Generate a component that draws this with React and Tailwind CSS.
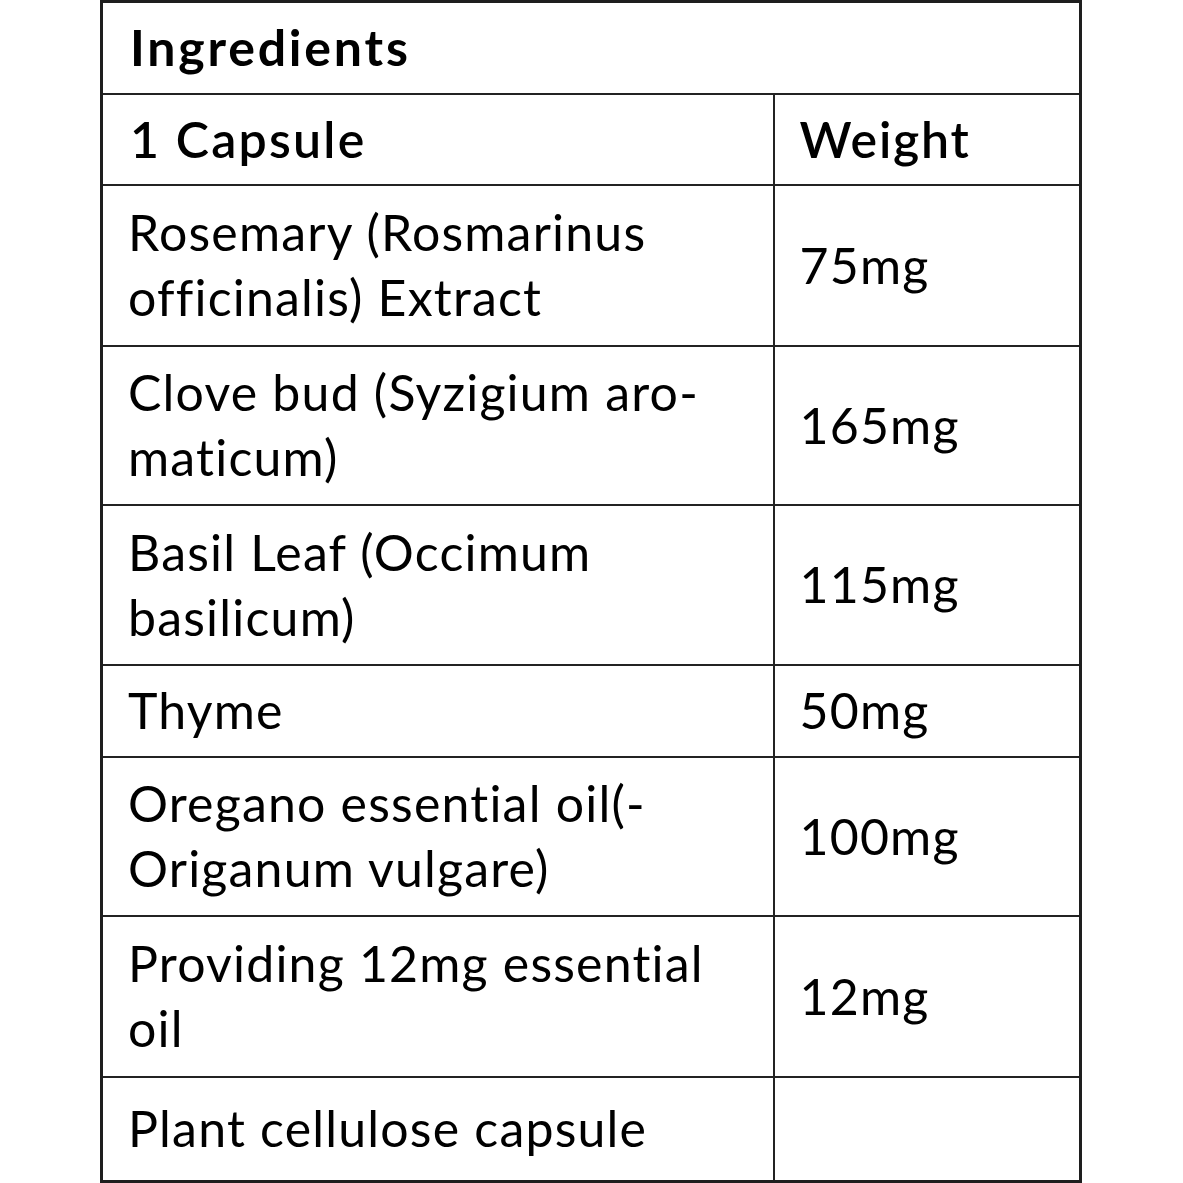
const rows = [
  { name: ["Rosemary (Rosmarinus", "officinalis) Extract"], weight: "75mg", h: "h-[161px]" },
  { name: ["Clove bud (Syzigium aro-", "maticum)"], weight: "165mg", h: "h-[159px]" },
  { name: ["Basil Leaf (Occimum", "basilicum)"], weight: "115mg", h: "h-[160px]" },
  { name: ["Thyme"], weight: "50mg", h: "h-[92px]" },
  { name: ["Oregano essential oil(-", "Origanum vulgare)"], weight: "100mg", h: "h-[159px]" },
  { name: ["Providing 12mg essential", "oil"], weight: "12mg", h: "h-[161px]" },
];

const cell = "border-2 border-[#232323] align-middle";

export default function App() {
  return (
    <div
      className="w-[1183px] h-[1183px] bg-white text-black"
      style={{ fontFamily: "Lato, 'Open Sans', sans-serif" }}
    >
      <table className="ml-[100px] w-[982px] table-fixed border-collapse border-[3px] border-[#1e1e1e] text-[50px] leading-[65px] tracking-[1.2px] [font-variant-ligatures:none]">
        <colgroup>
          <col className="w-[672px]" />
          <col />
        </colgroup>
        <tbody>
          <tr className="h-[92px]">
            <td colSpan={2} className={`${cell} pl-[27px] font-bold tracking-[2.8px]`}>
              Ingredients
            </td>
          </tr>
          <tr className="h-[91px]">
            <td className={`${cell} pl-[27px] font-semibold tracking-[2.2px]`}>1 Capsule</td>
            <td className={`${cell} pl-[25px] font-semibold tracking-[1.8px]`}>Weight</td>
          </tr>
          {rows.map((r) => (
            <tr key={r.weight} className={r.h}>
              <td className={`${cell} pl-[25px]`}>
                {r.name.map((line) => (
                  <div key={line}>{line}</div>
                ))}
              </td>
              <td className={`${cell} pl-[25px]`}>{r.weight}</td>
            </tr>
          ))}
          <tr className="h-[105px]">
            <td className={`${cell} pl-[25px]`}>Plant cellulose capsule</td>
            <td className={cell}></td>
          </tr>
        </tbody>
      </table>
    </div>
  );
}
